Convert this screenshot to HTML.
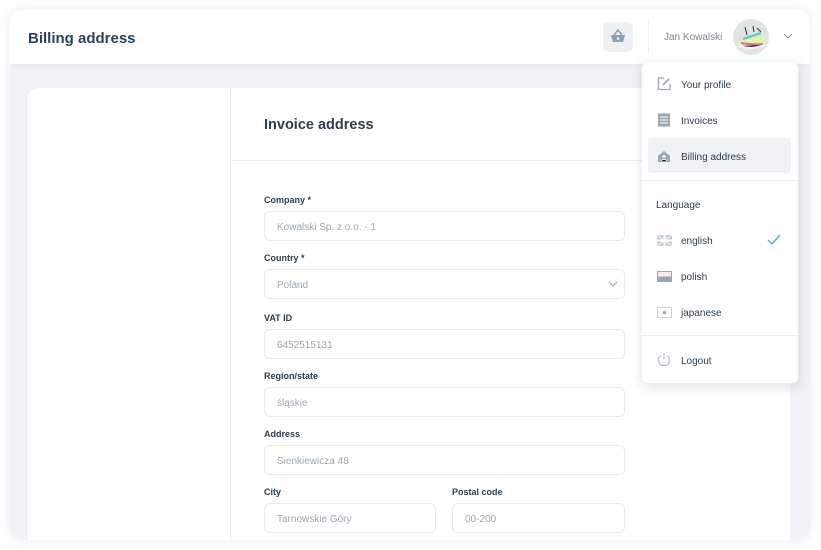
<!DOCTYPE html>
<html><head><meta charset="utf-8"><style>
*{box-sizing:border-box;margin:0;padding:0}
body{width:821px;height:550px;background:#fff;font-family:"Liberation Sans",sans-serif;position:relative;overflow:hidden}
.frame{position:absolute;left:10px;top:10px;width:800px;height:530px;border-radius:12px;overflow:hidden;box-shadow:0 0 10px rgba(120,150,180,.18);background:#eff3f6}
.hdr{position:absolute;left:0;top:0;width:800px;height:54px;background:#fff;box-shadow:0 2px 6px rgba(0,0,0,.04)}
.abs{position:absolute}
.card{position:absolute;left:18px;top:78px;width:762px;height:480px;background:#fff;border-radius:10px}
.lbl{position:absolute;font-size:9px;font-weight:bold;color:#2c3e50}
.inp{position:absolute;height:30px;border:1px solid #e6ebef;border-radius:6px;font-size:10px;color:#9aa6b2;padding:10px 0 0 12px}
.dd{position:absolute;left:642px;top:62px;width:156px;height:321px;background:#fff;border-radius:6px;box-shadow:0 3px 12px rgba(60,80,100,.18)}
.it{position:absolute;left:39px;font-size:10px;color:#2c3e50}
.ic{position:absolute;left:15px}
</style></head><body>
<div class="frame">
 <div class="hdr">
  <div class="abs" style="left:18px;top:20px;font-size:15px;font-weight:bold;color:#2c4459">Billing address</div>
  <div class="abs" style="left:593px;top:12px;width:30px;height:30px;background:#edf1f4;border-radius:5px">
   <svg width="30" height="30" viewBox="0 0 30 30"><path d="M11 13l4-5 4 5" fill="none" stroke="#8aa0b2" stroke-width="1.5"/><path d="M8 13h14l-2 7h-10z" fill="#8aa0b2"/><circle cx="15" cy="16.5" r="1.3" fill="#edf1f4"/></svg>
  </div>
  <div class="abs" style="left:638px;top:10px;width:1px;height:34px;background:#eef1f4"></div>
  <div class="abs" style="left:654px;top:22px;font-size:10px;color:#7a8896">Jan Kowalski</div>
  <div class="abs" style="left:723px;top:9px;width:36px;height:36px;border-radius:50%;background:#dfe6df;overflow:hidden">
   <svg width="36" height="36"><path d="M6 22c8-4 16-8 26-4l-1 8c-8 2-16 1-24-1z" fill="#e6f0a8"/><path d="M8 24c6 1 14 2 22 1" stroke="#e26a9a" stroke-width="2"/><path d="M10 20l18-6" stroke="#67c8c4" stroke-width="2.5"/><path d="M12 8l2 8M20 7l1 6M24 9l4 4" stroke="#333" stroke-width="1"/><path d="M6 27c10 3 18 2 26-1" stroke="#fff" stroke-width="2"/></svg>
  </div>
  <svg class="abs" style="left:773px;top:22px" width="10" height="8"><path d="M1 2l4 4 4-4" fill="none" stroke="#8a98a6" stroke-width="1.2"/></svg>
 </div>
 <div class="card">
  <div class="abs" style="left:202px;top:0;width:1px;height:480px;background:#e9edf1"></div>
  <div class="abs" style="left:202px;top:72px;width:560px;height:1px;background:#e9edf1"></div>
 </div>
</div>
<div class="abs" style="left:264px;top:117px;font-size:14.5px;font-weight:bold;color:#2c3e50">Invoice address</div>
<div class="lbl" style="left:264px;top:195px">Company *</div>
<div class="inp" style="left:264px;top:211px;width:361px">Kowalski Sp. z o.o. - 1</div>
<div class="lbl" style="left:264px;top:253px">Country *</div>
<div class="inp" style="left:264px;top:269px;width:361px">Poland<svg class="abs" style="right:6px;top:10px" width="10" height="8"><path d="M1 2l4 4 4-4" fill="none" stroke="#9aa6b2" stroke-width="1.1"/></svg></div>
<div class="lbl" style="left:264px;top:313px">VAT ID</div>
<div class="inp" style="left:264px;top:329px;width:361px">6452515131</div>
<div class="lbl" style="left:264px;top:371px">Region/state</div>
<div class="inp" style="left:264px;top:387px;width:361px">śląskie</div>
<div class="lbl" style="left:264px;top:429px">Address</div>
<div class="inp" style="left:264px;top:445px;width:361px">Sienkiewicza 48</div>
<div class="lbl" style="left:264px;top:487px">City</div>
<div class="inp" style="left:264px;top:503px;width:172px">Tarnowskie Góry</div>
<div class="lbl" style="left:452px;top:487px">Postal code</div>
<div class="inp" style="left:452px;top:503px;width:173px">00-200</div>
<div class="dd">
 <svg class="ic" style="top:15px" width="14" height="14"><path d="M7 1H1.5v11.5H13V7" fill="none" stroke="#9aa8b4" stroke-width="1.3"/><path d="M6 8l6-6" stroke="#9aa8b4" stroke-width="1.6"/></svg>
 <div class="it" style="top:18px">Your profile</div>
 <svg class="ic" style="top:51px" width="14" height="14"><rect x="1" y="0.5" width="12" height="13" fill="#9aa8b4"/><path d="M3 4h8M3 7h8M3 10h8" stroke="#fff" stroke-width="1"/></svg>
 <div class="it" style="top:54px">Invoices</div>
 <div class="abs" style="left:6px;top:76px;width:143px;height:35px;background:#eff2f5;border-radius:3px"></div>
 <svg class="ic" style="top:87px" width="14" height="14"><path d="M1 7L7 2l6 5v6H1z" fill="#9aa8b4"/><circle cx="7" cy="7.5" r="1.6" fill="#eff2f5"/><path d="M4 12c1-2 5-2 6 0" stroke="#eff2f5"/></svg>
 <div class="it" style="top:90px">Billing address</div>
 <div class="abs" style="left:0;top:118px;width:156px;height:1px;background:#e9edf1"></div>
 <div class="it" style="left:14px;top:138px">Language</div>
 <svg class="ic" style="top:173px" width="15" height="11"><rect width="15" height="11" fill="#c6d0d8"/><path d="M7.5 0v11M0 5.5h15" stroke="#fff" stroke-width="2"/><path d="M0 0l15 11M15 0L0 11" stroke="#fff" stroke-width=".8"/></svg>
 <div class="it" style="top:174px">english</div>
 <svg class="abs" style="left:125px;top:172px" width="14" height="11"><path d="M1 6l4 4 8-9" fill="none" stroke="#3dbfb8" stroke-width="1.4"/></svg>
 <svg class="ic" style="top:209px" width="15" height="11"><rect width="15" height="11" rx="1" fill="#9aa8b4"/><rect x="1" y="1" width="13" height="4.5" fill="#eef1f4"/></svg>
 <div class="it" style="top:210px">polish</div>
 <svg class="ic" style="top:245px" width="15" height="11"><rect x=".5" y=".5" width="14" height="10" rx="1" fill="#fff" stroke="#c6d0d8"/><circle cx="7.5" cy="5.5" r="1.8" fill="#9aa8b4"/></svg>
 <div class="it" style="top:246px">japanese</div>
 <div class="abs" style="left:0;top:273px;width:156px;height:1px;background:#e9edf1"></div>
 <svg class="ic" style="top:290px" width="14" height="14"><path d="M4 3.5a5.5 5.5 0 1 0 6 0" fill="none" stroke="#b0bcc6" stroke-width="1.2"/><path d="M7 1v6" stroke="#b0bcc6" stroke-width="1.2"/></svg>
 <div class="it" style="top:294px">Logout</div>
</div>
</body></html>
